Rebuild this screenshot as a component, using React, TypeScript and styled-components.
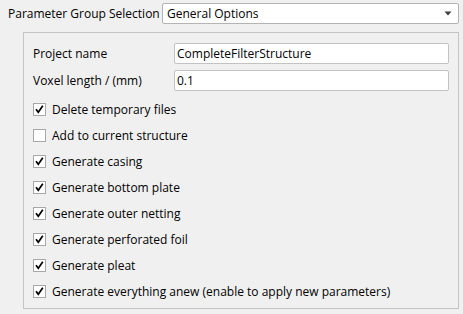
import React, { useState } from 'react';
import styled, { createGlobalStyle } from 'styled-components';

const GlobalStyle = createGlobalStyle`
    html, body {
        margin: 0;
        padding: 0;
        background: #f0f0f0;
    }
    body {
        font-family: "Open Sans", "Liberation Sans", Arial, sans-serif;
        font-size: 12px;
        color: #000;
    }
`

const Page = styled.div`
    display: flex;
    flex-direction: column;
    width: 463px;
    height: 314px;
    box-sizing: border-box;
    padding: 3px 4px 0 8px;
`

const TopRow = styled.div`
    display: flex;
    align-items: center;
    height: 21px;
`

const TopLabel = styled.label`
    width: 154px;
    white-space: nowrap;
`

const Combo = styled.div`
    flex: 1;
    height: 21px;
    box-sizing: border-box;
    display: flex;
    align-items: center;
    padding: 0 6px 0 4px;
    background: #fff;
    border: 1px solid #b4b4b4;
    border-radius: 2px;
`

const ComboText = styled.span`
    flex: 1;
`

const Group = styled.div`
    margin: 8px 0 0 15px;
    border: 1px solid #c4c4c4;
    padding: 10px 9px 4px 9px;
    display: flex;
    flex-direction: column;
`

const FormGrid = styled.div`
    display: grid;
    grid-template-columns: 141px 1fr;
    row-gap: 6px;
    align-items: center;
    margin-bottom: 5px;
`

const FieldLabel = styled.label`
    white-space: nowrap;
`

const LineEdit = styled.input`
    height: 21px;
    box-sizing: border-box;
    border: 1px solid #c2c2c2;
    border-radius: 2px;
    background: #fff;
    padding: 0 2px;
    font: inherit;
    color: #000;
    outline: none;
`

const CheckRow = styled.label`
    display: flex;
    align-items: center;
    height: 26px;
    gap: 6px;
    white-space: nowrap;
`

const Box = styled.span`
    width: 13px;
    height: 13px;
    box-sizing: border-box;
    border: 1px solid #a8a8a8;
    background: #fff;
    display: flex;
    align-items: center;
    justify-content: center;
`

function Arrow(): JSX.Element {
    return (
        <svg width="8" height="5" viewBox="0 0 8 5">
            <path d="M0.5 0.5 L7.5 0.5 L4 4.5 Z" fill="#3c3c3c" />
        </svg>
    );
}

function Checkbox({checked, label, onToggle}: {checked: boolean, label: string,
    onToggle: () => void}): JSX.Element
{
    return (
        <CheckRow onClick={onToggle}>
            <Box>
                {checked && (
                    <svg width="11" height="11" viewBox="0 0 11 11">
                        <path d="M2 5.2 L4.3 8.3 L8.8 1.8" fill="none"
                            stroke="#000" strokeWidth="1.7" />
                    </svg>
                )}
            </Box>
            <span>{label}</span>
        </CheckRow>
    );
}

const initialOptions = [
    { label: 'Delete temporary files', checked: true },
    { label: 'Add to current structure', checked: false },
    { label: 'Generate casing', checked: true },
    { label: 'Generate bottom plate', checked: true },
    { label: 'Generate outer netting', checked: true },
    { label: 'Generate perforated foil', checked: true },
    { label: 'Generate pleat', checked: true },
    { label: 'Generate everything anew (enable to apply new parameters)', checked: true },
];

function App(): JSX.Element {
    const [projectName, setProjectName] = useState("CompleteFilterStructure");
    const [voxelLength, setVoxelLength] = useState("0.1");
    const [options, setOptions] = useState(initialOptions);

    const toggle = (i: number) => {
        setOptions(options.map((o, j) => j === i ? { ...o, checked: !o.checked } : o));
    }

    return (
        <Page>
            <GlobalStyle />
            <TopRow>
                <TopLabel>Parameter Group Selection</TopLabel>
                <Combo>
                    <ComboText>General Options</ComboText>
                    <Arrow />
                </Combo>
            </TopRow>
            <Group>
                <FormGrid>
                    <FieldLabel>Project name</FieldLabel>
                    <LineEdit value={projectName}
                        onChange={e => setProjectName(e.target.value)} />
                    <FieldLabel>Voxel length / (mm)</FieldLabel>
                    <LineEdit value={voxelLength}
                        onChange={e => setVoxelLength(e.target.value)} />
                </FormGrid>
                {options.map((o, i) => (
                    <Checkbox key={o.label} label={o.label} checked={o.checked}
                        onToggle={() => toggle(i)} />
                ))}
            </Group>
        </Page>
    );
}

export default App
